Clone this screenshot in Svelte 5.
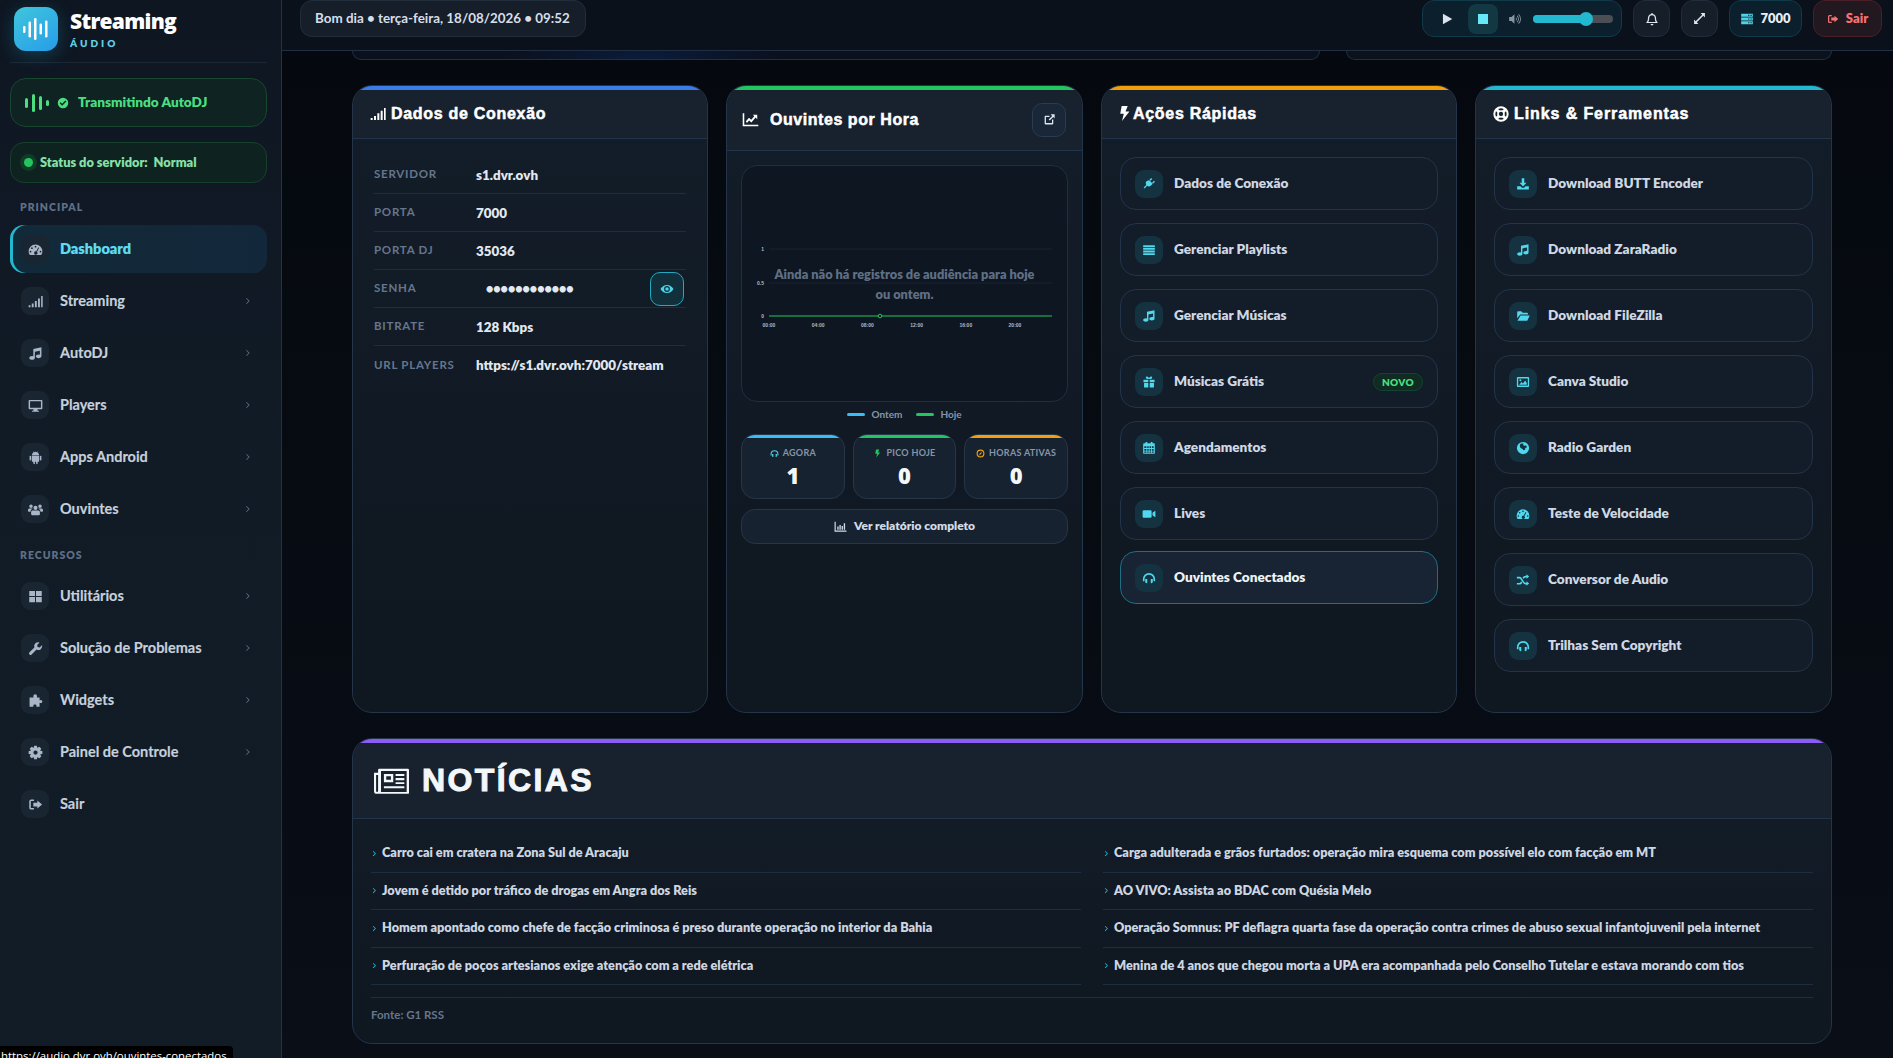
<script>
  function gear() {
    // 8 tooth cog, centred on 12,12
    let d = '';
    for (let i = 0; i < 8; i++) {
      const a = (i * Math.PI) / 4;
      const pt = (r, off) => `${(12 + r * Math.cos(a + off)).toFixed(2)} ${(12 + r * Math.sin(a + off)).toFixed(2)}`;
      d += `${i ? 'L' : 'M'}${pt(8.2, -0.36)}L${pt(11.2, -0.2)}L${pt(11.2, 0.2)}L${pt(8.2, 0.36)}`;
    }
    return d + 'zM12 8.6a3.4 3.4 0 1 0 0 6.8 3.4 3.4 0 0 0 0-6.8z';
  }

  const icons = {
    gauge: 'M12 4A11 11 0 0 0 1 15c0 2 .5 3.6 1.4 5 .3.4.7.6 1.2.6h16.8c.5 0 .9-.2 1.2-.6.9-1.4 1.4-3 1.4-5A11 11 0 0 0 12 4zM12 6a1.4 1.4 0 1 1 0 2.8A1.4 1.4 0 0 1 12 6zM6.3 8.4a1.4 1.4 0 1 1 0 2.8 1.4 1.4 0 0 1 0-2.8zM4 14a1.4 1.4 0 1 1 0 2.8A1.4 1.4 0 0 1 4 14zM20 14a1.4 1.4 0 1 1 0 2.8A1.4 1.4 0 0 1 20 14zM16.5 8.7l1.3.6-3.5 6.5a2.6 2.6 0 1 1-1.3-.7z',
    signal: 'M1 18h3v3H1zM6 15h3v6H6zM11 11h3v10h-3zM16 7h3v14h-3zM21 3h2.5v18H21z',
    music: 'M21.5 2L8.5 4.8v11.5A4.6 4.6 0 0 0 6.5 16C4 16 2 17.3 2 19s2 3 4.5 3 4.5-1.3 4.5-3V9.3l8-1.8v6.3a4.6 4.6 0 0 0-2-.3c-2.5 0-4.5 1.3-4.5 3s2 3 4.5 3 4.5-1.3 4.5-3z',
    desktop: 'M2.5 3h19A1.5 1.5 0 0 1 23 4.5v12a1.5 1.5 0 0 1-1.5 1.5H15l.5 2.5h2V22h-11v-1.5h2L9 18H2.5A1.5 1.5 0 0 1 1 16.5v-12A1.5 1.5 0 0 1 2.5 3zM3.3 5.3v10.4h17.4V5.3z',
    android: 'M6.2 9.2h11.6v8.6a1 1 0 0 1-1 1h-1.3v2.5a1.3 1.3 0 0 1-2.6 0v-2.5h-1.8v2.5a1.3 1.3 0 0 1-2.6 0v-2.5H7.2a1 1 0 0 1-1-1zM6.2 8.3C6.4 6.2 7.5 4.6 9 3.7L8 2.2l.5-.3 1.1 1.5a6 6 0 0 1 4.8 0l1.1-1.5.5.3-1 1.5c1.5.9 2.6 2.5 2.8 4.6zM3.8 9.2a1.3 1.3 0 0 1 1.3 1.3v5a1.3 1.3 0 0 1-2.6 0v-5a1.3 1.3 0 0 1 1.3-1.3zM20.2 9.2a1.3 1.3 0 0 1 1.3 1.3v5a1.3 1.3 0 0 1-2.6 0v-5a1.3 1.3 0 0 1 1.3-1.3z',
    users: 'M12 6a3.3 3.3 0 1 1 0 6.6A3.3 3.3 0 0 1 12 6zM4.8 4a2.8 2.8 0 1 1 0 5.6 2.8 2.8 0 0 1 0-5.6zM19.2 4a2.8 2.8 0 1 1 0 5.6 2.8 2.8 0 0 1 0-5.6zM7.5 13.5h9c1.5 0 2.5 1 2.5 2.5v3.5c0 .8-.7 1.5-1.5 1.5h-11C5.7 21 5 20.3 5 19.5V16c0-1.5 1-2.5 2.5-2.5zM2.5 10.5h3.8c.4 0 .7.2.9.5-1.5.5-3.2 1.5-3.2 4.5H1.3c-.7 0-1.3-.6-1.3-1.3V13c0-1.5 1-2.5 2.5-2.5zM17.7 10.5h3.8c1.5 0 2.5 1 2.5 2.5v1.2c0 .7-.6 1.3-1.3 1.3H20c0-3-1.7-4-3.2-4.5.2-.3.5-.5.9-.5z',
    grid: 'M2 3h9.2v8.2H2zM12.8 3H22v8.2h-9.2zM2 12.8h9.2V21H2zM12.8 12.8H22V21h-9.2z',
    wrench: 'M22.5 6.5l-3.8 3.8-3.4-.6-.6-3.4L18.5 2.5A6.2 6.2 0 0 0 10.2 10.3L2.4 18.1a2.4 2.4 0 0 0 3.4 3.4l7.8-7.8A6.2 6.2 0 0 0 22.5 6.5z',
    puzzle: 'M8.5 5a3 3 0 0 1 6 0c0 .8-.5 1.3-.5 2h4.5v4.5c.7 0 1.2-.5 2-.5a2.5 2.5 0 0 1 0 5c-.8 0-1.3-.5-2-.5V22h-5v-2c0-1-1-1.8-2.5-1.8S8.5 19 8.5 20v2h-6V7h6.5c0-.7-.5-1.2-.5-2z',
    cog: gear(),
    signout: 'M9.5 4H5a3 3 0 0 0-3 3v10a3 3 0 0 0 3 3h4.5v-2.5H5a.5.5 0 0 1-.5-.5V7a.5.5 0 0 1 .5-.5h4.5zM15 5.5L22.5 12 15 18.5V15H8.5V9H15z',
    plug: 'M12.5 5.5l6 6-3 3a5.3 5.3 0 0 1-6.7.7l-4.5 4.5-1.5-1.5 4.5-4.5a5.3 5.3 0 0 1 .7-6.7zM15.8 1.8l1.8 1.8-3 3-1.8-1.8zM20.4 6.4l1.8 1.8-3 3-1.8-1.8z',
    list: 'M2 4h20v3.2H2zM2 8.5h20v3.2H2zM2 13h20v3.2H2zM2 17.5h20v3H2z',
    gift: 'M2.5 8h8.3v4.5H2.5zM13.2 8h8.3v4.5h-8.3zM3.5 13.8h7.3v7.7H4.5a1 1 0 0 1-1-1zM13.2 13.8h7.3v6.7a1 1 0 0 1-1 1h-6.3zM12 7C9 7 6.5 6.2 6.5 4.5 6.5 3.2 7.5 2.5 8.7 2.5c1.5 0 2.6 1.3 3.3 3.3.7-2 1.8-3.3 3.3-3.3 1.2 0 2.2.7 2.2 2 0 1.7-2.5 2.5-5.5 2.5z',
    calendar: 'M6 1.5h3V4h6V1.5h3V4h2.5A1.5 1.5 0 0 1 22 5.5v15a1.5 1.5 0 0 1-1.5 1.5h-17A1.5 1.5 0 0 1 2 20.5v-15A1.5 1.5 0 0 1 3.5 4H6zM4 9v3h3.5V9zM9 9v3h2.5V9zM13 9v3h2.5V9zM17 9v3h3V9zM4 13.5v3h3.5v-3zM9 13.5v3h2.5v-3zM13 13.5v3h2.5v-3zM17 13.5v3h3v-3zM4 18v2h3.5v-2zM9 18v2h2.5v-2zM13 18v2h2.5v-2zM17 18v2h3v-2z',
    video: 'M3 5.5h11.5a2 2 0 0 1 2 2v9a2 2 0 0 1-2 2H3a2 2 0 0 1-2-2v-9a2 2 0 0 1 2-2zM18 10l4-3c.5-.3 1-.1 1 .5v9c0 .6-.5.8-1 .5l-4-3z',
    headphones: 'M12 3.5A10.5 10.5 0 0 0 1.5 14v3.5h2.8V14a7.7 7.7 0 0 1 15.4 0v3.5h2.8V14A10.5 10.5 0 0 0 12 3.5zM5.5 13.5H9V21H8a2.5 2.5 0 0 1-2.5-2.5zM15 13.5h3.5v5A2.5 2.5 0 0 1 16 21h-1z',
    download: 'M9.8 2h4.4v8H18l-6 6.3L6 10h3.8zM2 16h5.7l2.5 2.6h3.6l2.5-2.6H22v5.5H2z',
    folder: 'M2 5.5A1.5 1.5 0 0 1 3.5 4H9l2.5 2.5H19A1.5 1.5 0 0 1 20.5 8v1.5H7.3L2 16zM7.8 11h15.7l-4 8.5c-.2.4-.6.5-1 .5h-16z',
    image: 'M3 3.5h18A1.5 1.5 0 0 1 22.5 5v14a1.500 1.500 0 0 1-1.5 1.5H3A1.5 1.5 0 0 1 1.5 19V5A1.5 1.5 0 0 1 3 3.5zM3.8 5.8v12.4h16.4V5.8zM5.5 16.5l4-4.5 2.500 2.500 3.500-5 3 4v3zM7.5 7.3a1.8 1.8 0 1 1 0 3.6 1.8 1.8 0 0 1 0-3.6z',
    globe: 'M12 1.5a10.5 10.5 0 1 0 0 21 10.5 10.5 0 0 0 0-21zM7.5 5c2-1 4-1 5.5-.8l-1 2.3 2 1.5 3.5-.5 1.3 3-2.8 1.5-.5 3-2.5 1-2-2.5-3.5-2-1-3.2z',
    shuffle: 'M1.5 6.5H6c1.5 0 2.5.7 3.3 1.8l5 7.2c.5.7 1 1 1.7 1h2V14l4.5 4-4.5 4v-2.5h-2c-1.5 0-2.5-.7-3.3-1.8l-5-7.2c-.5-.7-1-1-1.7-1H1.5zM1.5 17H6c.7 0 1.2-.3 1.7-1l1.2-1.8 1.8 2.6-.7 1c-.8 1.1-1.8 1.7-3.3 1.7H1.5zM16 4.5h2V2l4.5 4-4.5 4V7.5h-2c-.7 0-1.2.3-1.7 1l-1.2 1.8-1.8-2.6.7-1c.8-1.1 1.8-1.7 3.3-1.7z',
    chartline: 'M1 3h2.2v16.3H23v2.2H1zM5.5 14.5l4.3-5 3.2 2.8 4.3-5-2-2h6.2v6.2l-2.3-2.2-6 7-3.2-2.8-3 3.5z',
    external: 'M4.5 5H12v2.4H5.4v11.2h11.2V12H19v7.5a1.5 1.5 0 0 1-1.5 1.5h-13A1.5 1.5 0 0 1 3 19.5v-13A1.5 1.5 0 0 1 4.5 5zM14 2.5h7.5V10L19 7.5l-6.5 6.5-2-2L17 5.5z',
    bolt: 'M8 1.5h8.5L13.5 9H19L8.5 22.5 11 12.5H6z',
    chartbar: 'M1 3h2.2v16.3H23v2.2H1zM6 12h2.5v6H6zM10 9h2.5v9H10zM14 11h2.5v7H14zM18 6h2.5v12H18z',
    eye: 'M12 5C7 5 3 8 .8 12 3 16 7 19 12 19s9-3 11.2-7C21 8 17 5 12 5zM12 7a5 5 0 1 0 0 10 5 5 0 0 0 0-10zM12 9a3 3 0 1 1 0 6 3 3 0 0 1 0-6z',
    check: 'M12 1.5a10.5 10.5 0 1 0 0 21 10.5 10.5 0 0 0 0-21zM10.3 17.3l-5-5 2-2 3 3 6.4-6.4 2 2z',
    play: 'M5 3l16 9-16 9z',
    stop: 'M2 2h20v20H2z',
    volume: 'M2 8.5h4L11 4v16l-5-4.5H2zM13.5 9a4 4 0 0 1 0 6zM16 6a8 8 0 0 1 0 12l-.9-1.2a6.5 6.5 0 0 0 0-9.6zM18.5 3.5a11.5 11.5 0 0 1 0 17l-.9-1.2a10 10 0 0 0 0-14.6z',
    bell: 'M12 1.5c.8 0 1.4.6 1.4 1.4v.7c3.5.7 5.6 3.6 5.6 7.1 0 3.5 1 5.3 2.5 6.8.6.6.2 1.5-.6 1.5H3.1c-.8 0-1.2-.9-.6-1.5C4 16 5 14.2 5 10.7c0-3.5 2.1-6.4 5.6-7.1v-.7c0-.8.6-1.4 1.4-1.4zM12 5.5c-2.8 0-4.8 2.2-4.8 5.2 0 2.8-.6 4.7-1.6 6.3h12.8c-1-1.6-1.6-3.5-1.6-6.3 0-3-2-5.2-4.8-5.2zM9.5 20.5h5a2.5 2.5 0 0 1-5 0z',
    expand: 'M14 2h8v8l-3-3-12 12 3 3H2v-8l3 3L17 5z',
    server: 'M2 3h20v5.3H2zM14 4.7v2h2v-2zM18 4.7v2h2v-2zM2 9.5h20v5H2zM14 11v2h2v-2zM18 11v2h2v-2zM2 15.7h20V21H2zM14 17.4v2h2v-2zM18 17.4v2h2v-2z',
    chevron: 'M8 3l9 9-9 9-1.8-1.8L13.4 12 6.2 4.8z',
    gaugeclock: 'M12 1.5a10.5 10.5 0 1 0 0 21 10.5 10.5 0 0 0 0-21zM12 4.5a7.5 7.5 0 1 1 0 15 7.5 7.5 0 0 1 0-15zM16 7l-2.5 6-5.5 4 2.5-6z'
  };

  const principal = [
    { label: 'Dashboard', icon: 'gauge', active: true },
    { label: 'Streaming', icon: 'signal' },
    { label: 'AutoDJ', icon: 'music' },
    { label: 'Players', icon: 'desktop' },
    { label: 'Apps Android', icon: 'android' },
    { label: 'Ouvintes', icon: 'users' }
  ];
  const recursos = [
    { label: 'Utilitários', icon: 'grid' },
    { label: 'Solução de Problemas', icon: 'wrench' },
    { label: 'Widgets', icon: 'puzzle' },
    { label: 'Painel de Controle', icon: 'cog' },
    { label: 'Sair', icon: 'signout', plain: true }
  ];
  const conexao = [
    ['SERVIDOR', 's1.dvr.ovh'],
    ['PORTA', '7000'],
    ['PORTA DJ', '35036'],
    ['SENHA', null],
    ['BITRATE', '128 Kbps'],
    ['URL PLAYERS', 'https://s1.dvr.ovh:7000/stream']
  ];
  const acoes = [
    { label: 'Dados de Conexão', icon: 'plug' },
    { label: 'Gerenciar Playlists', icon: 'list' },
    { label: 'Gerenciar Músicas', icon: 'music' },
    { label: 'Músicas Grátis', icon: 'gift', badge: 'NOVO' },
    { label: 'Agendamentos', icon: 'calendar' },
    { label: 'Lives', icon: 'video' },
    { label: 'Ouvintes Conectados', icon: 'headphones', hover: true }
  ];
  const links = [
    { label: 'Download BUTT Encoder', icon: 'download' },
    { label: 'Download ZaraRadio', icon: 'music' },
    { label: 'Download FileZilla', icon: 'folder' },
    { label: 'Canva Studio', icon: 'image' },
    { label: 'Radio Garden', icon: 'globe' },
    { label: 'Teste de Velocidade', icon: 'gauge' },
    { label: 'Conversor de Audio', icon: 'shuffle' },
    { label: 'Trilhas Sem Copyright', icon: 'headphones' }
  ];
  const noticias = [
    'Carro cai em cratera na Zona Sul de Aracaju',
    'Carga adulterada e grãos furtados: operação mira esquema com possível elo com facção em MT',
    'Jovem é detido por tráfico de drogas em Angra dos Reis',
    'AO VIVO: Assista ao BDAC com Quésia Melo',
    'Homem apontado como chefe de facção criminosa é preso durante operação no interior da Bahia',
    'Operação Somnus: PF deflagra quarta fase da operação contra crimes de abuso sexual infantojuvenil pela internet',
    'Perfuração de poços artesianos exige atenção com a rede elétrica',
    'Menina de 4 anos que chegou morta a UPA era acompanhada pelo Conselho Tutelar e estava morando com tios'
  ];
  const horas = ['00:00', '04:00', '08:00', '12:00', '16:00', '20:00'];
</script>

{#snippet ico(name, size = 14)}
  <svg class="ico" width={size} height={size} viewBox="0 0 24 24" aria-hidden="true"><path fill-rule="evenodd" d={icons[name]} /></svg>
{/snippet}

{#snippet navItem(item)}
  <div class="nav-item" class:active={item.active}>
    <span class="nav-ico">{@render ico(item.icon, 15)}</span>
    <span class="nav-label">{item.label}</span>
    {#if !item.active && !item.plain}<span class="nav-chev">{@render ico('chevron', 8)}</span>{/if}
  </div>
{/snippet}

{#snippet quickRow(row)}
  <div class="quick" class:hover={row.hover}>
    <span class="quick-ico">{@render ico(row.icon, 14)}</span>
    <span class="quick-label">{row.label}</span>
    {#if row.badge}<span class="badge">{row.badge}</span>{/if}
  </div>
{/snippet}

<div class="shell">
  <aside class="sidebar">
    <div class="brand">
      <div class="logo">
        <svg width="26" height="22" viewBox="0 0 26 22" aria-hidden="true">
          <rect x="0" y="8" width="2.5" height="7" rx="1.2" />
          <rect x="5.5" y="3.5" width="2.5" height="16" rx="1.2" />
          <rect x="11" y="0" width="2.5" height="22" rx="1.2" />
          <rect x="16.5" y="5.5" width="2.5" height="11" rx="1.2" />
          <rect x="22" y="2.5" width="2.5" height="17" rx="1.2" />
        </svg>
      </div>
      <div>
        <div class="brand-name">Streaming</div>
        <div class="brand-sub">ÁUDIO</div>
      </div>
    </div>

    <div class="autodj">
      <svg width="24" height="18" viewBox="0 0 24 18" aria-hidden="true">
        <rect x="0" y="4" width="3" height="10" rx="1.5" />
        <rect x="7" y="0" width="3" height="18" rx="1.5" />
        <rect x="14" y="2" width="3" height="14" rx="1.5" />
        <rect x="21" y="6" width="3" height="6" rx="1.5" />
      </svg>
      {@render ico('check', 12)}
      <span class="lift">Transmitindo AutoDJ</span>
    </div>

    <div class="server-status">
      <span class="dot"></span>
      <span class="lift">Status do servidor:&nbsp; Normal</span>
    </div>

    <div class="nav-title first">PRINCIPAL</div>
    <nav class="nav">
      {#each principal as item}{@render navItem(item)}{/each}
    </nav>
    <div class="nav-title">RECURSOS</div>
    <nav class="nav">
      {#each recursos as item}{@render navItem(item)}{/each}
    </nav>
  </aside>

  <div class="main">
    <header class="topbar">
      <div class="pill date"><span class="lift">Bom dia • terça-feira, 18/08/2026 • 09:52</span></div>
      <div class="top-right">
        <div class="pill player">
          <span class="p-play">{@render ico('play', 14)}</span>
          <span class="p-stop">{@render ico('stop', 12)}</span>
          <span class="p-vol">{@render ico('volume', 14)}</span>
          <span class="slider"><span class="slider-fill"></span><span class="thumb"></span></span>
        </div>
        <div class="pill square">{@render ico('bell', 14)}</div>
        <div class="pill square">{@render ico('expand', 13)}</div>
        <div class="pill port"><span class="port-ico">{@render ico('server', 14)}</span><span class="lift">7000</span></div>
        <div class="pill exit">{@render ico('signout', 12)}<span class="lift">Sair</span></div>
      </div>
    </header>

    <main class="content">
      <div class="hero-row">
        <div class="hero wide"></div>
        <div class="hero"></div>
      </div>

      <section class="cards">
        <article class="card blue">
          <h2 class="card-head conn">{@render ico('signal', 16)}<span>Dados de Conexão</span></h2>
          <div class="info">
            {#each conexao as [label, value]}
              <div class="info-row">
                <span class="info-label">{label}</span>
                {#if value}
                  <span class="info-value">{value}</span>
                {:else}
                  <span class="info-value secret">••••••••••••</span>
                  <button class="eye">{@render ico('eye', 14)}</button>
                {/if}
              </div>
            {/each}
          </div>
        </article>

        <article class="card green">
          <h2 class="card-head tall">
            {@render ico('chartline', 17)}<span class="gap-title">Ouvintes por Hora</span>
            <button class="open">{@render ico('external', 13)}</button>
          </h2>
          <div class="hour-body">
            <div class="chart">
              <svg width="327" height="237" viewBox="0 0 327 237" aria-hidden="true">
                <line x1="28" x2="311" y1="84" y2="84" class="grid-line" />
                <line x1="28" x2="311" y1="118" y2="118" class="grid-line" />
                <line x1="28" x2="311" y1="151" y2="151" class="today-line" />
                <circle cx="139" cy="151" r="1.8" class="today-dot" />
                <text x="23" y="86" text-anchor="end">1</text>
                <text x="23" y="120" text-anchor="end">0.5</text>
                <text x="23" y="153" text-anchor="end">0</text>
                {#each horas as h, i}
                  <text x={28 + i * 49.2} y="162" text-anchor="middle">{h}</text>
                {/each}
              </svg>
              <p class="empty">Ainda não há registros de audiência para hoje ou ontem.</p>
            </div>
            <div class="legend">
              <span class="swatch sky"></span><span>Ontem</span>
              <span class="swatch lime"></span><span>Hoje</span>
            </div>
            <div class="stats">
              <div class="stat s-sky">
                <div class="stat-label"><span class="c-cyan">{@render ico('headphones', 9)}</span>AGORA</div>
                <div class="stat-value">1</div>
              </div>
              <div class="stat s-lime">
                <div class="stat-label"><span class="c-lime">{@render ico('bolt', 9)}</span>PICO HOJE</div>
                <div class="stat-value">0</div>
              </div>
              <div class="stat s-amber">
                <div class="stat-label"><span class="c-amber">{@render ico('gaugeclock', 9)}</span>HORAS ATIVAS</div>
                <div class="stat-value">0</div>
              </div>
            </div>
            <div class="report">{@render ico('chartbar', 13)}<span class="lift">Ver relatório completo</span></div>
          </div>
        </article>

        <article class="card amber">
          <h2 class="card-head actions">{@render ico('bolt', 17)}<span>Ações Rápidas</span></h2>
          <div class="quick-list">
            {#each acoes as row}{@render quickRow(row)}{/each}
          </div>
        </article>

        <article class="card cyan">
          <h2 class="card-head tools">
            <svg class="ico" width="16" height="16" viewBox="0 0 24 24" aria-hidden="true">
              <circle cx="12" cy="12" r="10" fill="none" stroke="currentColor" stroke-width="3" />
              <circle cx="12" cy="12" r="4.5" fill="none" stroke="currentColor" stroke-width="2.5" />
              <path d="M5 5l4 4M19 5l-4 4M5 19l4-4M19 19l-4-4" stroke="currentColor" stroke-width="4.5" />
            </svg>
            <span>Links &amp; Ferramentas</span>
          </h2>
          <div class="quick-list">
            {#each links as row}{@render quickRow(row)}{/each}
          </div>
        </article>
      </section>

      <section class="news">
        <h2 class="news-head">
          <svg class="ico" width="35" height="28" viewBox="0 0 30 24" aria-hidden="true">
            <path fill-rule="evenodd" d="M4.5 1.5H29a1 1 0 0 1 1 1V22a1 1 0 0 1-1 1H2.5A2.5 2.5 0 0 1 0 20.5V5h3.5V2.5a1 1 0 0 1 1-1zM6 3.5v17c0 .4 0 .7-.2 1H28v-18zM1.8 6.8v13.700a.7.7 0 0 0 1.700 0V6.800zM8.500 6h8v7h-8zM10.500 8v3h4V8zM18.500 6H26v1.800h-7.500zM18.500 9.500H26v1.800h-7.500zM18.500 13H26v1.500h-7.500zM8.500 16.500H26v1.800H8.500z" />
          </svg>
          <span>NOTÍCIAS</span>
        </h2>
        <div class="news-body">
          <ul class="news-list">
            {#each noticias as n}
              <li><span class="news-chev">{@render ico('chevron', 7)}</span><span class="lift">{n}</span></li>
            {/each}
          </ul>
          <div class="news-foot">Fonte: G1 RSS</div>
        </div>
      </section>
    </main>
  </div>

  <div class="status-tip">https://audio.dvr.ovh/ouvintes-conectados</div>
</div>

<style>
  :global(body) {
    margin: 0;
    background: #070b12;
    font-family: Lato, "Open Sans", sans-serif;
    color: #e2e8f0;
    overflow: hidden;
  }
  .shell {
    position: relative;
    display: grid;
    grid-template-columns: 282px 1fr;
    height: 1058px;
    overflow: hidden;
  }
  .ico { fill: currentColor; display: block; flex: none; }
  /* Lato sits a little low in its line box */
  .lift { padding-bottom: 2px; }

  /* sidebar */
  .sidebar {
    background: linear-gradient(180deg, #0e1622 0%, #111b26 40%, #121c27 100%);
    border-right: 1px solid #253246;
    padding: 0 14px 0 10px;
    display: flex;
    flex-direction: column;
  }
  .brand {
    display: flex;
    gap: 12px;
    height: 63px;
    padding: 7px 0 0 4px;
    box-sizing: border-box;
    border-bottom: 1px solid #1c2735;
  }
  .logo {
    width: 44px;
    height: 44px;
    border-radius: 12px;
    background: linear-gradient(145deg, #3fc6dc, #279de9);
    box-shadow: 0 4px 18px rgba(34, 184, 207, 0.25);
    display: flex;
    align-items: center;
    justify-content: center;
  }
  .logo svg { fill: #fff; }
  .brand-name {
    font-size: 21px;
    font-weight: 800;
    letter-spacing: -0.7px;
    line-height: 28px;
    color: #fff;
    font-family: "Open Sans", sans-serif;
  }
  .brand-sub {
    font-size: 10px;
    font-weight: 800;
    letter-spacing: 3px;
    line-height: 12px;
    color: #5ed2e6;
    margin-top: 2px;
  }
  .autodj {
    margin-top: 15px;
    height: 49px;
    box-sizing: border-box;
    border: 1px solid #17472f;
    border-radius: 16px;
    background: #0e2322;
    display: flex;
    align-items: center;
    gap: 8px;
    padding-left: 14px;
    color: #4ade80;
    font-size: 13.6px;
    font-weight: 800;
  }
  .autodj span { margin-left: 1px; }
  .autodj svg { fill: #4ade80; }
  .server-status {
    margin-top: 15px;
    height: 41px;
    box-sizing: border-box;
    border: 1px solid #17402c;
    border-radius: 14px;
    background: #0e2320;
    display: flex;
    align-items: center;
    gap: 7px;
    padding-left: 13px;
    color: #86e0a8;
    font-size: 12.8px;
    font-weight: 800;
  }
  .dot {
    width: 9px;
    height: 9px;
    border-radius: 50%;
    background: #22c55e;
    box-shadow: 0 0 0 4px rgba(34, 197, 94, 0.14);
  }
  .nav-title {
    margin: 15px 0 10px 10px;
    font-size: 10.5px;
    line-height: 14px;
    font-weight: 800;
    letter-spacing: 1px;
    color: #5f6f85;
  }
  .nav-title.first { margin-top: 17px; margin-bottom: 11px; }
  .nav { display: flex; flex-direction: column; gap: 4px; }
  .nav-item {
    height: 48px;
    display: flex;
    align-items: center;
    gap: 11px;
    padding: 0 15px 0 11px;
    border-radius: 14px;
    font-size: 14.5px;
    font-weight: 700;
    color: #c6d0dc;
    -webkit-text-stroke: 0.15px currentColor;
  }
  .nav-item.active {
    background: linear-gradient(90deg, #112a39, #13273a);
    box-shadow: inset 3px 0 0 #22b8cf;
    color: #5fdcf0;
    font-weight: 800;
  }
  .nav-ico {
    width: 28px;
    height: 28px;
    border-radius: 9px;
    background: #1a2532;
    color: #a8b6c8;
    display: flex;
    align-items: center;
    justify-content: center;
  }
  .nav-label { flex: 1; padding-bottom: 2px; }
  .nav-chev { color: #5a6b80; }

  /* top bar */
  .main { min-width: 0; display: flex; flex-direction: column; }
  .topbar {
    height: 51px;
    box-sizing: border-box;
    border-bottom: 1px solid #1f3044;
    padding: 0 11px 0 18px;
    display: flex;
    align-items: flex-start;
    justify-content: space-between;
    background: #0a111b;
  }
  .top-right { display: flex; gap: 11px; }
  .pill {
    height: 37px;
    box-sizing: border-box;
    border: 1px solid #222d3c;
    border-radius: 12px;
    background: #161e2a;
    display: flex;
    align-items: center;
    font-size: 13px;
    font-weight: 700;
  }
  .date { padding: 0 14px; color: #d7dfe9; width: 286px; font-size: 13.4px; white-space: nowrap; }
  .player {
    width: 200px;
    background: #0c1f2c;
    border-color: #103a48;
    padding-left: 17px;
  }
  .p-play { color: #dbe4ee; }
  .p-stop {
    width: 30px;
    height: 30px;
    margin-left: 14px;
    border-radius: 8px;
    background: #123844;
    color: #67e8f9;
    display: flex;
    align-items: center;
    justify-content: center;
  }
  .p-vol { color: #8594a6; margin-left: 10px; }
  .slider {
    position: relative;
    width: 80px;
    height: 8px;
    margin-left: 11px;
    border-radius: 4px;
    background: #4b4f55;
  }
  .slider-fill {
    display: block;
    width: 53px;
    height: 8px;
    border-radius: 4px;
    background: #22b8cf;
  }
  .thumb {
    position: absolute;
    left: 46px;
    top: -3px;
    width: 14px;
    height: 14px;
    border-radius: 50%;
    background: #22b8cf;
  }
  .square { width: 37px; justify-content: center; color: #dde5ee; }
  .port {
    width: 73px;
    justify-content: center;
    gap: 6px;
    background: #0c1f2c;
    border-color: #103a48;
    color: #e8eef5;
    font-weight: 800;
  }
  .port-ico { color: #4fd2e6; }
  .exit {
    width: 69px;
    justify-content: center;
    gap: 7px;
    background: #211820;
    border-color: #4a1f28;
    color: #f87171;
    font-weight: 800;
  }

  /* content */
  .content { padding: 0 61px 0 70px; flex: 1; background: linear-gradient(180deg, #05090f, #090e17); }
  .hero-row { display: grid; grid-template-columns: 968px 1fr; gap: 26px; height: 9px; }
  .hero {
    box-sizing: border-box;
    border: 1px solid #1f3044;
    border-top: 0;
    border-radius: 0 0 18px 18px;
    background: #0b121c;
  }
  .hero.wide { background: radial-gradient(140px 30px at 30% 100%, #0a1c3c, #0b101d); }
  .cards {
    margin-top: 25px;
    display: grid;
    grid-template-columns: 356px 357px 356px 357px;
    gap: 18px;
    height: 628px;
  }
  .card, .news {
    position: relative;
    box-sizing: border-box;
    border: 1px solid #243449;
    border-radius: 20px;
    overflow: hidden;
    background: linear-gradient(180deg, #131d29, #0f1720);
  }
  .card::before, .news::before {
    content: '';
    position: absolute;
    left: 0;
    right: 0;
    top: -1px;
    height: 5px;
    background: var(--accent);
  }
  .blue { --accent: #3b7de8; }
  .green { --accent: #22c55e; }
  .amber { --accent: #f59e0b; }
  .cyan { --accent: #22b8cf; }
  .card-head {
    margin: 0;
    height: 53px;
    box-sizing: border-box;
    padding: 3px 17px 0;
    border-bottom: 1px solid #22344a;
    background: #18222f;
    display: flex;
    align-items: center;
    color: #fff;
    font-family: "Liberation Sans", Arial, sans-serif;
    font-size: 16px;
    font-weight: 700;
    letter-spacing: 0.7px;
    -webkit-text-stroke: 0.5px #fff;
  }
  .conn { gap: 5px; }
  .actions { padding-left: 14px; gap: 0; }
  .tools { gap: 5px; letter-spacing: 0.9px; }
  .card-head.tall { height: 65px; padding: 3px 16px 0 15px; gap: 11px; letter-spacing: 0.55px; }
  .gap-title { flex: 1; }
  .open, .eye {
    display: flex;
    align-items: center;
    justify-content: center;
    padding: 0;
    box-sizing: border-box;
  }
  .open {
    width: 34px;
    height: 34px;
    border-radius: 10px;
    border: 1px solid #2b3b50;
    background: #1a2738;
    color: #dde5ee;
  }

  /* dados de conexao */
  .info { padding: 17px 21px 0; }
  .info-row {
    height: 38px;
    box-sizing: border-box;
    display: flex;
    align-items: center;
    border-bottom: 1px solid #1e2d3f;
  }
  .info-row:last-child { border-bottom: 0; }
  .info-label {
    width: 102px;
    flex: none;
    padding-bottom: 2px;
    font-size: 11.5px;
    font-weight: 700;
    letter-spacing: 0.75px;
    color: #66768c;
  }
  .info-value { font-size: 13.4px; font-weight: 800; color: #e2e8f0; white-space: nowrap; }
  .secret { flex: 1; padding-left: 10px; font-size: 12.6px; }
  .eye {
    width: 34px;
    height: 34px;
    margin-right: 2px;
    border-radius: 10px;
    border: 1px solid #22a9c0;
    background: #12303c;
    color: #4fd2e6;
  }

  /* ouvintes por hora */
  .hour-body { padding: 14px 14px 0; display: flex; flex-direction: column; }
  .chart {
    position: relative;
    height: 237px;
    box-sizing: border-box;
    border: 1px solid #1f2e41;
    border-radius: 16px;
    background: #0e1621;
  }
  .chart svg { display: block; margin: -1px; }
  .chart text {
    font-family: "Liberation Sans", sans-serif;
    font-size: 5px;
    font-weight: 700;
    fill: #aeb9c7;
  }
  .grid-line { stroke: #182330; stroke-width: 1; }
  .today-line { stroke: #22c55e; stroke-width: 1; }
  .today-dot { fill: #0e1621; stroke: #22c55e; stroke-width: 1; }
  .empty {
    position: absolute;
    left: 0;
    right: 0;
    top: 50%;
    margin: 0;
    padding: 0 28px;
    transform: translateY(-50%);
    text-align: center;
    font-size: 12.8px;
    line-height: 20px;
    font-weight: 800;
    color: #5f6f85;
  }
  .legend {
    margin-top: 5px;
    height: 14px;
    display: flex;
    align-items: center;
    justify-content: center;
    gap: 6px;
    font-size: 10px;
    font-weight: 700;
    color: #8695a8;
  }
  .swatch { width: 18px; height: 3px; border-radius: 2px; }
  .swatch.lime { margin-left: 8px; background: #22c55e; }
  .swatch.sky { background: #38bdf8; }
  .stats {
    margin-top: 13px;
    display: grid;
    grid-template-columns: repeat(3, 1fr);
    gap: 8px;
  }
  .stat {
    position: relative;
    height: 65px;
    box-sizing: border-box;
    border: 1px solid #263649;
    border-radius: 14px;
    overflow: hidden;
    background: #172231;
    text-align: center;
    padding-top: 12px;
  }
  .stat::before {
    content: '';
    position: absolute;
    left: 0;
    right: 0;
    top: -1px;
    height: 4px;
    background: var(--accent);
  }
  .s-sky { --accent: #38bdf8; }
  .s-lime { --accent: #22c55e; }
  .s-amber { --accent: #f59e0b; }
  .stat-label {
    display: flex;
    align-items: center;
    justify-content: center;
    gap: 4px;
    font-size: 9px;
    line-height: 12px;
    font-weight: 700;
    letter-spacing: 0.3px;
    color: #8695a8;
    white-space: nowrap;
  }
  .c-cyan { color: #4fd2e6; }
  .c-lime { color: #22c55e; }
  .c-amber { color: #f59e0b; }
  .stat-value {
    margin-top: 2px;
    font-family: "Open Sans", sans-serif;
    font-size: 22px;
    line-height: 28px;
    font-weight: 800;
    color: #f4f7fa;
  }
  .report {
    margin-top: 10px;
    height: 35px;
    box-sizing: border-box;
    border: 1px solid #263649;
    border-radius: 14px;
    background: #172231;
    display: flex;
    align-items: center;
    justify-content: center;
    gap: 7px;
    color: #d3dce6;
    font-size: 12px;
    font-weight: 800;
  }

  /* listas */
  .quick-list { padding: 18px 18px 0; display: flex; flex-direction: column; gap: 13px; }
  .quick {
    height: 53px;
    box-sizing: border-box;
    border: 1px solid #22344a;
    border-radius: 16px;
    background: #131d2a;
    display: flex;
    align-items: center;
    gap: 11px;
    padding: 0 14px;
    font-size: 13.6px;
    font-weight: 800;
    color: #cfd8e3;
  }
  .quick.hover {
    margin-top: -2px;
    border-color: #1d6f84;
    background: #182434;
    color: #eef3f8;
  }
  .quick-ico {
    width: 28px;
    height: 28px;
    border-radius: 9px;
    background: #14323f;
    color: #4fd8ee;
    display: flex;
    align-items: center;
    justify-content: center;
  }
  .quick-label { flex: 1; padding-bottom: 2px; }
  .badge {
    width: 50px;
    height: 18px;
    box-sizing: border-box;
    border: 1px solid #14432d;
    border-radius: 9px;
    background: #0f2b22;
    color: #4ade80;
    font-size: 10px;
    line-height: 16px;
    font-weight: 800;
    letter-spacing: 0.4px;
    text-align: center;
  }

  /* noticias */
  .news { --accent: #8b5cf6; height: 306px; margin-top: 25px; }
  .news-head {
    margin: 0;
    height: 80px;
    box-sizing: border-box;
    padding: 4px 21px 0;
    border-bottom: 1px solid #22344a;
    background: #18222f;
    display: flex;
    align-items: center;
    gap: 13px;
    color: #f4f7fa;
    font-family: "Liberation Sans", Arial, sans-serif;
    font-size: 32px;
    font-weight: 700;
    letter-spacing: 2.4px;
    -webkit-text-stroke: 1px #f4f7fa;
  }
  .news-body { padding: 16px 18px 0; }
  .news-list {
    list-style: none;
    margin: 0;
    padding: 0;
    display: grid;
    grid-template-columns: 1fr 1fr;
    column-gap: 22px;
  }
  .news-list li {
    height: 37.5px;
    box-sizing: border-box;
    border-bottom: 1px solid #1e2d3f;
    display: flex;
    align-items: center;
    gap: 5px;
    font-size: 12.7px;
    font-weight: 800;
    color: #cdd6e1;
    white-space: nowrap;
  }
  .news-chev { color: #22b8cf; width: 6px; }
  .news-foot {
    margin-top: 12px;
    border-top: 1px solid #1e2d3f;
    padding-top: 9px;
    font-size: 11.5px;
    line-height: 16px;
    font-weight: 700;
    color: #66768c;
  }

  .status-tip {
    position: absolute;
    left: 0;
    top: 1046px;
    width: 233px;
    height: 12px;
    overflow: hidden;
    border-top-right-radius: 4px;
    background: #000;
    color: #fff;
    font-family: "Open Sans", sans-serif;
    font-size: 11.4px;
    line-height: 20px;
    white-space: nowrap;
    padding-left: 1px;
    box-sizing: border-box;
  }
</style>
